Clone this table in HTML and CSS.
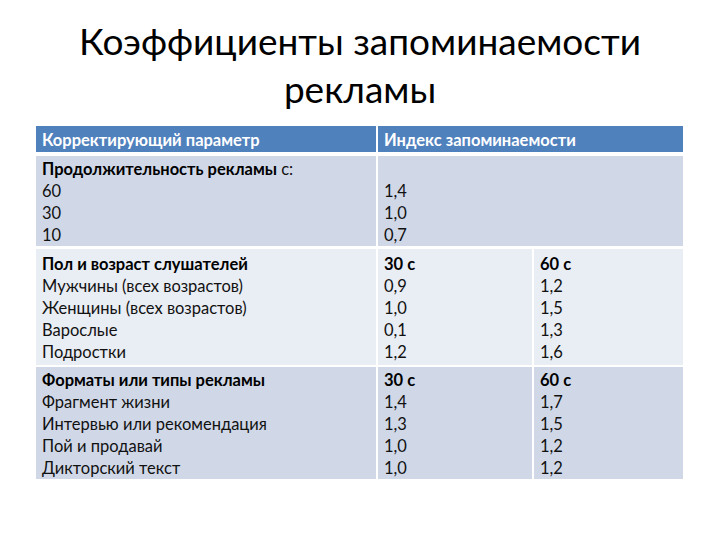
FILE: index.html
```html
<!DOCTYPE html>
<html lang="ru">
<head>
<meta charset="utf-8">
<title>Коэффициенты запоминаемости рекламы</title>
<link rel="stylesheet" href="styles.css">
</head>
<body>
<div class="slide">
  <h1 class="title">Коэффициенты запоминаемости<br>рекламы</h1>
  <table class="grid">
    <colgroup>
      <col class="c1"><col class="c2"><col class="c3">
    </colgroup>
    <thead>
      <tr class="head">
        <th>Корректирующий параметр</th>
        <th colspan="2" class="last">Индекс запоминаемости</th>
      </tr>
    </thead>
    <tbody>
      <tr class="dark r1">
        <td><b>Продолжительность рекламы</b> с:<br>60<br>30<br>10</td>
        <td colspan="2" class="last"><br>1,4<br>1,0<br>0,7</td>
      </tr>
      <tr class="light r2">
        <td><b>Пол и возраст слушателей</b><br>Мужчины (всех возрастов)<br>Женщины (всех возрастов)<br>Варослые<br>Подростки</td>
        <td><b>30 с</b><br>0,9<br>1,0<br>0,1<br>1,2</td>
        <td class="last"><b>60 с</b><br>1,2<br>1,5<br>1,3<br>1,6</td>
      </tr>
      <tr class="dark r3">
        <td><b>Форматы или типы рекламы</b><br>Фрагмент жизни<br>Интервью или рекомендация<br>Пой и продавай<br>Дикторский текст</td>
        <td><b>30 с</b><br>1,4<br>1,3<br>1,0<br>1,0</td>
        <td class="last"><b>60 с</b><br>1,7<br>1,5<br>1,2<br>1,2</td>
      </tr>
    </tbody>
  </table>
</div>
</body>
</html>
```
FILE: styles.css
```css
html, body {
  margin: 0;
  padding: 0;
  background: #ffffff;
}
.slide {
  width: 720px;
  height: 540px;
  padding-top: 17px;
  box-sizing: border-box;
  font-family: Lato, "Open Sans", "Liberation Sans", sans-serif;
  color: #000;
}
.title {
  margin: 0 0 13px 0;
  text-align: center;
  font-weight: normal;
  font-size: 37px;
  line-height: 48px;
  color: #000;
}
.grid {
  margin-left: 36px;
  border-collapse: separate;
  border-spacing: 0;
  table-layout: fixed;
  width: 647px;
  font-size: 16.5px;
  line-height: 22px;
}
.c1 { width: 342px; }
.c2 { width: 156px; }
.c3 { width: 149px; }
.grid th, .grid td {
  border-right: 2px solid #ffffff;
  border-bottom: 2px solid #ffffff;
  text-align: left;
  vertical-align: top;
  padding: 2px 6px 0 6px;
  box-sizing: border-box;
}
.grid .last { border-right: 0; }
.grid th {
  background: #4f81bd;
  color: #ffffff;
  font-weight: bold;
  padding: 3px 6px 1px 6px;
  border-bottom-width: 4px;
}
.head { height: 30px; }
.r1 { height: 93px; }
.r1 td { border-bottom-width: 3px; }
.r2 { height: 118px; }
.r2 td { padding-top: 4px; }
.r3 { height: 112px; }
.r3 td { border-bottom: 0; }
.grid td { color: #111; }
.grid b { font-weight: bold; color: #000; }
.dark td { background: #d0d8e8; }
.light td { background: #e9edf4; }
```
